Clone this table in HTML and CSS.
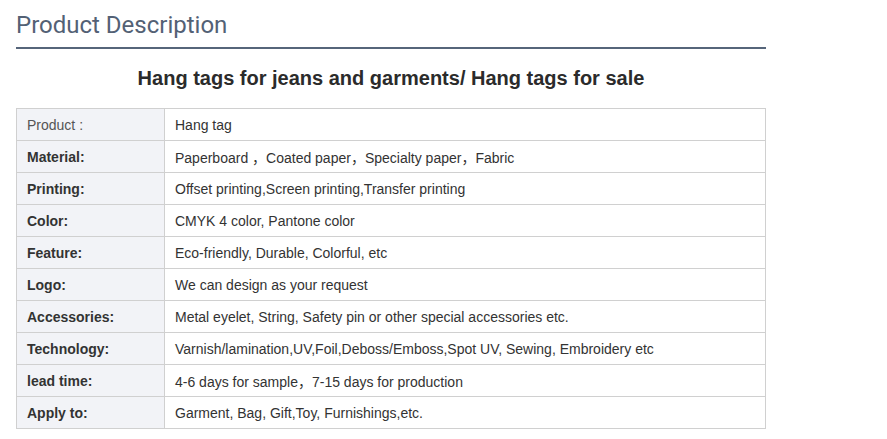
FILE: index.html
```html
<!DOCTYPE html>
<html>
<head>
<meta charset="utf-8">
<link rel="stylesheet" href="styles.css">
</head>
<body>
<div class="wrap">
  <h2 class="section-title">Product Description</h2>
  <h1 class="headline">Hang tags for jeans and garments/ Hang tags for sale</h1>
  <table class="spec">
    <tr><td class="k plain">Product :</td><td>Hang tag</td></tr>
    <tr><td class="k">Material:</td><td>Paperboard ，Coated paper，Specialty paper，Fabric</td></tr>
    <tr><td class="k">Printing:</td><td>Offset printing,Screen printing,Transfer printing</td></tr>
    <tr><td class="k">Color:</td><td>CMYK 4 color, Pantone color</td></tr>
    <tr><td class="k">Feature:</td><td>Eco-friendly, Durable, Colorful, etc</td></tr>
    <tr><td class="k">Logo:</td><td>We can design as your request</td></tr>
    <tr><td class="k">Accessories:</td><td>Metal eyelet, String, Safety pin or other special accessories etc.</td></tr>
    <tr><td class="k">Technology:</td><td>Varnish/lamination,UV,Foil,Deboss/Emboss,Spot UV, Sewing, Embroidery etc</td></tr>
    <tr><td class="k">lead time:</td><td>4-6 days for sample，7-15 days for production</td></tr>
    <tr><td class="k">Apply to:</td><td>Garment, Bag, Gift,Toy, Furnishings,etc.</td></tr>
  </table>
</div>
</body>
</html>
```
FILE: styles.css
```css
html, body { margin: 0; padding: 0; background: #fff; }
body { font-family: "Liberation Sans", Arial, "Noto Sans CJK SC", sans-serif; color: #333; }
.wrap { width: 750px; margin-left: 16px; padding-top: 9px; }
.section-title {
  font-family: Roboto, sans-serif;
  font-weight: 400;
  font-size: 24px;
  line-height: 32px;
  color: #536175;
  margin: 0;
  padding-bottom: 6px;
  border-bottom: 2px solid #56657a;
}
.headline {
  margin: 0;
  padding: 17px 0 0;
  font-size: 20px;
  line-height: 24px;
  font-weight: 700;
  text-align: center;
  color: #2b2b2b;
}
.spec { width: 750px; border-collapse: collapse; margin-top: 18px; }
.spec td {
  border: 1px solid #d0d0d0;
  height: 32px;
  padding: 0 10px;
  font-size: 14px;
  color: #333;
  box-sizing: border-box;
}
.spec td.k { width: 148px; background: #f2f3f7; font-weight: 700; }
.spec td.k.plain { font-weight: 400; color: #555; }
```
